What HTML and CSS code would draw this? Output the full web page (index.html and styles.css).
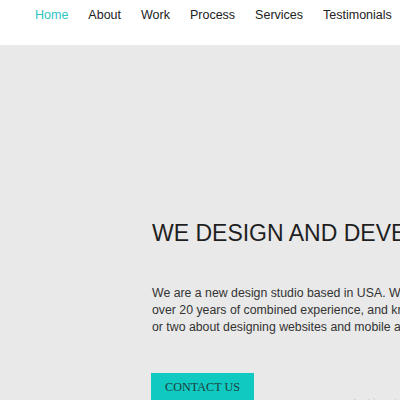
FILE: index.html
```html
<!DOCTYPE html>
<html lang="en">
<head>
<meta charset="utf-8">
<title>Studio</title>
<link rel="stylesheet" href="styles.css">
</head>
<body>
<header class="header">
  <nav class="nav">
    <a class="nav-link active" href="#">Home</a>
    <a class="nav-link" href="#">About</a>
    <a class="nav-link" href="#">Work</a>
    <a class="nav-link" href="#">Process</a>
    <a class="nav-link" href="#">Services</a>
    <a class="nav-link" href="#">Testimonials</a>
    <a class="nav-link" href="#">Contact</a>
  </nav>
</header>
<main class="hero">
  <div class="hero-content">
    <h1 class="hero-title">WE DESIGN AND DEVELOP WEBSITES</h1>
    <p class="hero-text">We are a new design studio based in USA. We have<br>over 20 years of combined experience, and know a thing<br>or two about designing websites and mobile apps.</p>
    <a class="btn" href="#">CONTACT US</a>
  </div>
</main>
<div class="watermark">Activate Windows</div>
</body>
</html>
```
FILE: styles.css
```css
html, body {
  margin: 0;
  padding: 0;
  height: 100%;
  overflow: hidden;
}
body {
  font-family: "Liberation Sans", Arial, sans-serif;
  background: #e9e9e9;
}
.header {
  background: #ffffff;
  height: 45px;
}
.nav {
  display: flex;
  gap: 20px;
  padding: 8px 0 0 35px;
  white-space: nowrap;
}
.nav-link {
  font-size: 12.5px;
  line-height: 14px;
  color: #222222;
  text-decoration: none;
}
.nav-link.active {
  color: #2ec4c0;
}
.hero {
  padding: 175px 0 0 152px;
}
.hero-content {
  width: 420px;
}
.hero-title {
  margin: 0;
  font-weight: normal;
  font-size: 23px;
  line-height: 26px;
  color: #1f1f1f;
  white-space: nowrap;
}
.hero-text {
  margin: 39px 0 0;
  font-size: 12.3px;
  line-height: 17px;
  color: #333333;
  white-space: nowrap;
}
.btn {
  display: inline-block;
  margin: 37px 0 0 -1px;
  padding: 6px 14px 6px 14px;
  background: #10c9c0;
  color: #1d3f3f;
  font-family: "Liberation Serif", "Times New Roman", serif;
  font-size: 12.2px;
  line-height: 16px;
  text-decoration: none;
}
.watermark {
  position: fixed;
  left: 350px;
  top: 396px;
  font-family: "DejaVu Sans", sans-serif;
  font-size: 14px;
  color: #d2d2d2;
  white-space: nowrap;
}
```
